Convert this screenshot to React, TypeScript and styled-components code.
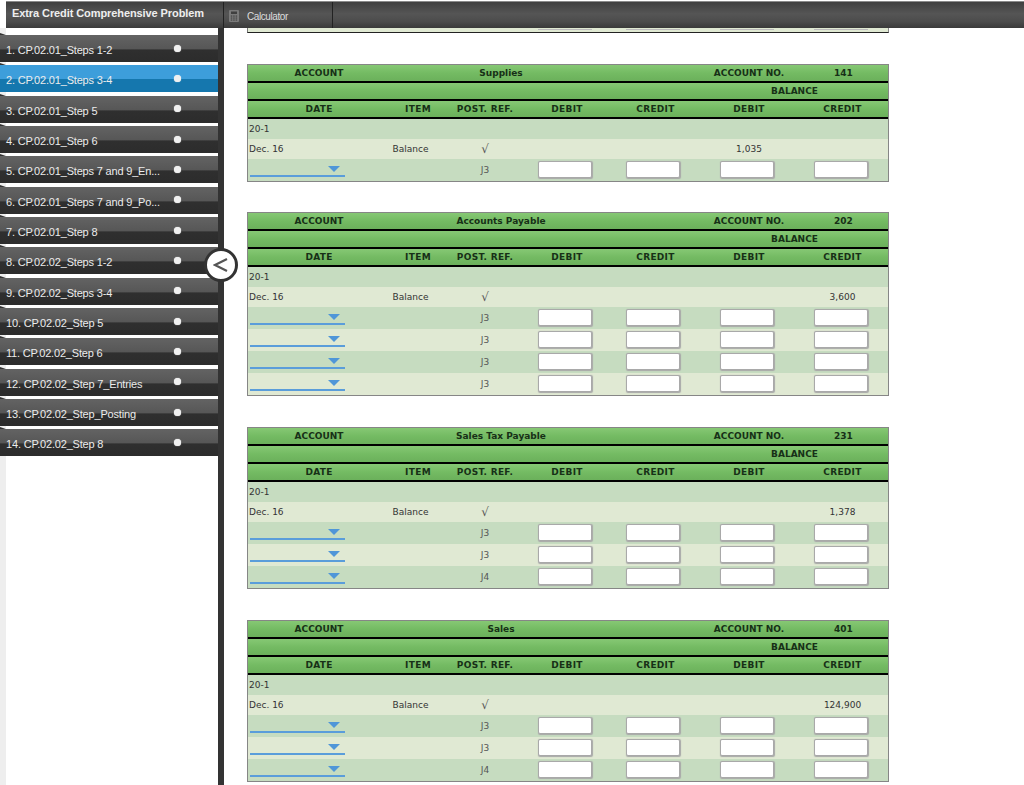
import React from "react";
import styled, { createGlobalStyle } from "styled-components";

const Global = createGlobalStyle`
  html, body { margin: 0; padding: 0; background: #fff; }
  * { box-sizing: border-box; }
`;

const Page = styled.div`
  width: 1024px;
  height: 785px;
  overflow: hidden;
  display: flex;
  flex-direction: column;
  position: relative;
  background: #fff;
`;

const TopBar = styled.header`
  margin: 1px 0 0 6px;
  height: 27px;
  flex: none;
  display: flex;
  align-items: stretch;
  background: linear-gradient(#3f3f3f 0%, #555 45%, #4c4c4c 75%, #3a3a3a 100%);
  border-top: 1px solid #8a8a8a;
  color: #fff;
  font-family: "Liberation Sans", Arial, sans-serif;
  position: relative;
  z-index: 2;
`;

const Title = styled.div`
  width: 218px;
  padding: 5px 0 0 6px;
  font-size: 11px;
  letter-spacing: -0.09px;
  font-weight: 700;
  color: #eee;
  white-space: nowrap;
  border-right: 1px solid #222;
`;

const CalcTab = styled.div`
  width: 109px;
  display: flex;
  align-items: center;
  gap: 8px;
  padding: 2px 0 0 5px;
  font-size: 10px;
  letter-spacing: -0.42px;
  color: #ddd;
  border-right: 1px solid #222;
`;

const Body = styled.div`
  flex: 1;
  display: flex;
  min-height: 0;
`;

const Sidebar = styled.nav`
  width: 224px;
  flex: none;
  padding-top: 7px;
  border-right: 6px solid #333;
  background: linear-gradient(to right, #eee 0, #eee 6px, #fff 6px);
  display: flex;
  flex-direction: column;
  gap: 3.35px;
  position: relative;
  font-family: "Liberation Sans", Arial, sans-serif;
`;

const Item = styled.div<{ $active?: boolean }>`
  height: 27px;
  flex: none;
  display: flex;
  align-items: center;
  padding: 3px 0 0 6px;
  font-size: 11px;
  letter-spacing: -0.18px;
  color: #ececec;
  position: relative;
  background: ${(p) =>
    p.$active
      ? "linear-gradient(#3d9edb 0, #3d9edb 50%, #1577ae 50%, #1577ae 100%)"
      : "linear-gradient(#636363 0, #575757 50%, #2f2f2f 56%, #2c2c2c 100%)"};
  box-shadow: 0 -1px 0 #fff;

  &::before {
    content: "";
    position: absolute;
    left: 0;
    top: -2px;
    border-bottom: 2px solid #333;
    border-right: 6px solid transparent;
  }
`;

const ItemLabel = styled.span`
  width: 168px;
  white-space: nowrap;
`;

const Dot = styled.span`
  width: 7px;
  height: 7px;
  margin-top: -4px;
  border-radius: 50%;
  background: #f0f0f0;
  box-shadow: 0 0 1px #fff;
`;

const Toggle = styled.button`
  position: absolute;
  right: -20px;
  top: 220px;
  width: 34px;
  height: 34px;
  padding: 0;
  border: 3px solid #333;
  border-radius: 50%;
  background: #fff;
  display: flex;
  align-items: center;
  justify-content: center;
`;

const Main = styled.main`
  flex: 1;
  padding-left: 23px;
  display: flex;
  flex-direction: column;
  align-items: flex-start;
  gap: 31px;
  min-width: 0;
`;

const columns = "142px 56px 78px 86px 91px 96px 91px";

const Stub = styled.div`
  width: 642px;
  height: 5px;
  flex: none;
  display: grid;
  grid-template-columns: ${columns};
  background: #e0e9d3;
  border-left: 1px solid #777;
  border-right: 1px solid #888;
  border-bottom: 1px solid #222;
  overflow: hidden;
`;

const StubInput = styled.div<{ $col: number; $offset: number }>`
  grid-column: ${(p) => p.$col};
  width: 54px;
  height: 1px;
  margin: 1px 0 0 ${(p) => p.$offset}px;
  background: #bbb;
`;

const Ledger = styled.section<{ $pull?: boolean }>`
  width: 642px;
  flex: none;
  margin-top: ${(p) => (p.$pull ? "-1px" : "0")};
  border: 1px solid #868686;
  font-family: "DejaVu Sans", Verdana, sans-serif;
  font-size: 9px;
  color: #333;
`;

const HeadRow = styled.div<{ $spaced?: boolean }>`
  display: grid;
  grid-template-columns: ${columns};
  height: 18px;
  border-bottom: 2px solid #000;
  background: linear-gradient(#86c874 0, #74bb63 50%, #6bb05b 100%);
  color: #173017;
  font-weight: 700;
  align-items: center;
  text-align: center;
  letter-spacing: ${(p) => (p.$spaced ? "0.3px" : "0")};
`;

const NameCell = styled.div`
  grid-column: 2 / span 3;
  padding-left: 2px;
`;

const NoLabel = styled.div`
  grid-column: 6;
`;

const NoValue = styled.div`
  padding-left: 2px;
`;

const BalanceCell = styled.div`
  grid-column: 6 / span 2;
`;

const DataRow = styled.div<{ $tone: "dark" | "light"; $tall?: boolean }>`
  display: grid;
  grid-template-columns: ${columns};
  height: ${(p) => (p.$tall ? 22 : 20)}px;
  align-items: center;
  background: ${(p) => (p.$tone === "dark" ? "#c6dcc0" : "#e0e9d3")};
`;

const YearCell = styled.div`
  padding-left: 1px;
`;

const AmountCell = styled.div<{ $col: number }>`
  text-align: center;
  grid-column: ${(p) => p.$col};
`;

const ItemCell = styled.div`
  text-align: center;
  padding-right: 15px;
  grid-column: 2;
  margin-left: -20px;
  margin-right: -20px;
`;

const RefCell = styled.div<{ $check?: boolean }>`
  grid-column: 3;
  text-align: center;
  color: #555;
  font-size: ${(p) => (p.$check ? 12 : 9)}px;
`;

const DateSelect = styled.div`
  width: 95px;
  height: 18px;
  margin: 0 0 0 2px;
  border-bottom: 2px solid #5a9dda;
  position: relative;
  align-self: start;
`;

const Caret = styled.span`
  position: absolute;
  right: 5px;
  top: 7px;
  border-left: 6px solid transparent;
  border-right: 6px solid transparent;
  border-top: 6px solid #4f96d8;
`;

const AmountInput = styled.input<{ $offset: number }>`
  display: block;
  width: 54px;
  height: 17px;
  margin: 0 0 1px ${(p) => p.$offset}px;
  padding: 0;
  border: 1px solid #a9a9a9;
  border-radius: 2px;
  background: #fff;
  box-shadow: 0.5px 0.5px 1px #a8a8a8;
`;

const CalcIcon = () => (
  <svg width="10" height="12" viewBox="0 0 10 12" aria-hidden="true">
    <rect x="0" y="0" width="10" height="12" rx="1" fill="#7a7a7a" />
    <rect x="2" y="1.5" width="6" height="2.5" fill="#3f3f3f" />
    {[5.5, 7.5, 9.5].map((y) =>
      [1.8, 4.2, 6.6].map((x) => <rect key={`${x}-${y}`} x={x} y={y} width="1.5" height="1.1" fill="#3f3f3f" />)
    )}
  </svg>
);

const steps = [
  "1. CP.02.01_Steps 1-2",
  "2. CP.02.01_Steps 3-4",
  "3. CP.02.01_Step 5",
  "4. CP.02.01_Step 6",
  "5. CP.02.01_Steps 7 and 9_En...",
  "6. CP.02.01_Steps 7 and 9_Po...",
  "7. CP.02.01_Step 8",
  "8. CP.02.02_Steps 1-2",
  "9. CP.02.02_Steps 3-4",
  "10. CP.02.02_Step 5",
  "11. CP.02.02_Step 6",
  "12. CP.02.02_Step 7_Entries",
  "13. CP.02.02_Step_Posting",
  "14. CP.02.02_Step 8",
];

const ledgers = [
  { name: "Supplies", no: "141", side: 6, amount: "1,035", refs: ["J3"] },
  { name: "Accounts Payable", no: "202", side: 7, amount: "3,600", refs: ["J3", "J3", "J3", "J3"], pull: true },
  { name: "Sales Tax Payable", no: "231", side: 7, amount: "1,378", refs: ["J3", "J3", "J4"] },
  { name: "Sales", no: "401", side: 7, amount: "124,900", refs: ["J3", "J3", "J4"] },
];

const amountColumns = ["DEBIT", "CREDIT", "DEBIT", "CREDIT"];
const inputs = [
  { col: 4, offset: 14, label: "debit" },
  { col: 5, offset: 16, label: "credit" },
  { col: 6, offset: 19, label: "balance debit" },
  { col: 7, offset: 17, label: "balance credit" },
];

export default function App() {
  return (
    <Page>
      <Global />
      <TopBar>
        <Title>Extra Credit Comprehensive Problem</Title>
        <CalcTab>
          <CalcIcon />
          Calculator
        </CalcTab>
      </TopBar>
      <Body>
        <Sidebar>
          {steps.map((s, i) => (
            <Item key={s} $active={i === 1}>
              <ItemLabel>{s}</ItemLabel>
              <Dot />
            </Item>
          ))}
          <Toggle aria-label="Collapse">
            <svg width="16" height="16" viewBox="0 0 16 16" aria-hidden="true">
              <path d="M14 2 L2 8 L14 14" fill="none" stroke="#555" strokeWidth="2.2" />
            </svg>
          </Toggle>
        </Sidebar>
        <Main>
          <Stub>
            {inputs.map((c) => (
              <StubInput key={c.col} $col={c.col} $offset={c.offset} />
            ))}
          </Stub>
          {ledgers.map((l) => (
            <Ledger key={l.no} $pull={l.pull}>
              <HeadRow>
                <div>ACCOUNT</div>
                <NameCell>{l.name}</NameCell>
                <NoLabel>ACCOUNT NO.</NoLabel>
                <NoValue>{l.no}</NoValue>
              </HeadRow>
              <HeadRow>
                <BalanceCell>BALANCE</BalanceCell>
              </HeadRow>
              <HeadRow $spaced>
                <div>DATE</div>
                <div>ITEM</div>
                <div>POST. REF.</div>
                {amountColumns.map((c, i) => (
                  <div key={i}>{c}</div>
                ))}
              </HeadRow>
              <DataRow $tone="dark">
                <YearCell>20-1</YearCell>
              </DataRow>
              <DataRow $tone="light">
                <YearCell>Dec. 16</YearCell>
                <ItemCell>Balance</ItemCell>
                <RefCell $check>√</RefCell>
                <AmountCell $col={l.side}>{l.amount}</AmountCell>
              </DataRow>
              {l.refs.map((r, i) => (
                <DataRow key={i} $tall $tone={i % 2 === 0 ? "dark" : "light"}>
                  <DateSelect>
                    <Caret />
                  </DateSelect>
                  <RefCell>{r}</RefCell>
                  {inputs.map((c) => (
                    <AmountCell key={c.col} $col={c.col}>
                      <AmountInput $offset={c.offset} aria-label={c.label} />
                    </AmountCell>
                  ))}
                </DataRow>
              ))}
            </Ledger>
          ))}
        </Main>
      </Body>
    </Page>
  );
}
